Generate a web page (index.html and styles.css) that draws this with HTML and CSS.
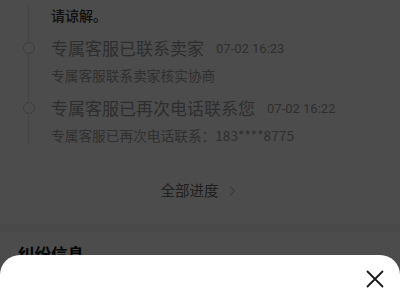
FILE: index.html
```html
<!DOCTYPE html>
<html lang="zh-CN">
<head>
<meta charset="utf-8">
<link rel="stylesheet" href="styles.css">
</head>
<body>
<div class="page">
  <section class="card progress">
    <div class="timeline">
      <div class="item tail">
        <div class="rail"></div>
        <div class="body"><p class="note">请谅解。</p></div>
      </div>
      <div class="item">
        <div class="rail"><span class="dot"></span></div>
        <div class="body">
          <div class="head"><span class="title">专属客服已联系卖家</span><span class="time">07-02 16:23</span></div>
          <p class="desc">专属客服联系卖家核实协商</p>
        </div>
      </div>
      <div class="item">
        <div class="rail"><span class="dot"></span></div>
        <div class="body">
          <div class="head"><span class="title">专属客服已再次电话联系您</span><span class="time">07-02 16:22</span></div>
          <p class="desc">专属客服已再次电话联系：183****8775</p>
        </div>
      </div>
    </div>
    <div class="more">全部进度<svg class="chev" width="8" height="12" viewBox="0 0 8 12"><path d="M2 1.5 6.5 6 2 10.5" fill="none" stroke="#c8c8c8" stroke-width="1.3"/></svg></div>
  </section>
  <section class="card info">
    <h2 class="section-title">纠纷信息</h2>
  </section>
</div>
<div class="mask"></div>
<div class="sheet">
  <div class="sheet-head">
    <button class="close" aria-label="关闭"><svg width="18" height="18" viewBox="0 0 18 18"><path d="M1.5 1.5 16.5 16.5M16.5 1.5 1.5 16.5" stroke="#1a1a1a" stroke-width="1.8" stroke-linecap="round"/></svg></button>
  </div>
</div>
</body>
</html>
```

FILE: styles.css
```css
* { box-sizing: border-box; }
html, body {
  margin: 0;
  width: 400px;
  height: 300px;
  overflow: hidden;
}
body {
  font-family: "Noto Sans CJK SC", "Noto Sans", sans-serif;
  background: #f4f4f4;
  position: relative;
}
p, h2 { margin: 0; }
.page {
  display: flex;
  flex-direction: column;
  gap: 8px;
}
.card {
  background: #fff;
}
.progress {
  padding: 5px 0 24px 18px;
}
.timeline {
  background: linear-gradient(#e2e2e2, #e2e2e2) no-repeat 10px 0 / 1px 100%;
}
.item {
  display: grid;
  grid-template-columns: 33px 1fr;
  margin-top: 11px;
}
.item.tail { margin-top: 0; }
.dot {
  display: block;
  width: 12px;
  height: 12px;
  margin: 6px 0 0 4.5px;
  border: 1.5px solid #c8c8c8;
  border-radius: 50%;
  background: #fff;
}
.note {
  font-size: 14px;
  line-height: 20px;
  color: #333;
  font-weight: 500;
}
.head {
  display: flex;
  align-items: center;
  gap: 12px;
  height: 24px;
}
.title {
  font-size: 17px;
  line-height: 24px;
  color: #9a9a9a;
}
.time {
  font-family: Roboto, "Noto Sans", sans-serif;
  font-size: 13px;
  color: #9a9a9a;
  margin-top: 1px;
}
.desc {
  margin-top: 5px;
  font-size: 13.7px;
  line-height: 20px;
  color: #a0a0a0;
}
.more {
  margin-top: 35px;
  margin-left: -18px;
  display: flex;
  justify-content: center;
  align-items: center;
  gap: 9px;
  font-size: 14.5px;
  line-height: 20px;
  color: #6a6a6a;
  padding-right: 4px;
}
.chev { margin-top: 1px; }
.info {
  padding: 10px 18px 20px;
}
.section-title {
  font-size: 16.5px;
  line-height: 24px;
  font-weight: 700;
  color: #111;
}
.mask {
  position: absolute;
  inset: 0;
  background: rgba(0, 0, 0, 0.7);
}
.sheet {
  position: absolute;
  left: 0;
  right: 0;
  top: 255px;
  bottom: 0;
  background: #fff;
  border-radius: 20px 20px 0 0;
}
.sheet-head {
  display: flex;
  justify-content: flex-end;
  padding: 15px 16px 0 0;
}
.close {
  border: 0;
  background: none;
  padding: 0;
  width: 18px;
  height: 18px;
  display: flex;
}
```
